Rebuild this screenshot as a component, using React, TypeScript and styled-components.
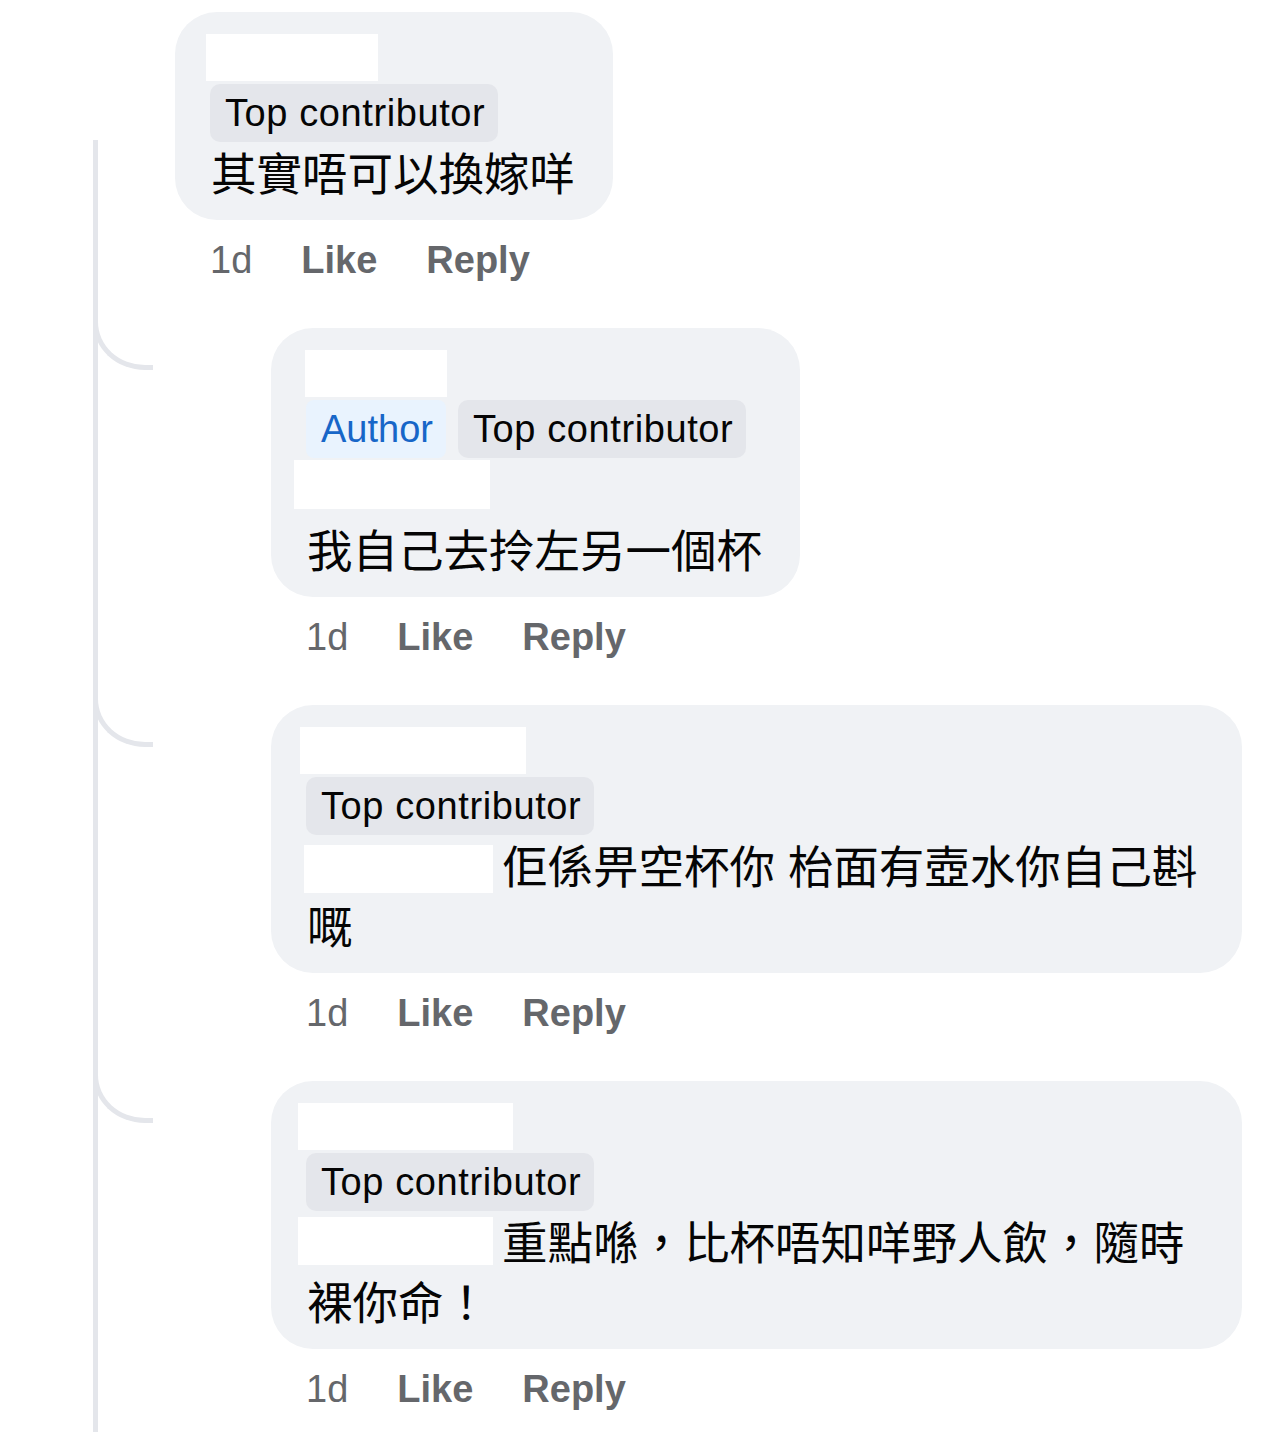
import React from "react";
import styled, { createGlobalStyle, css } from "styled-components";

const GlobalStyle = createGlobalStyle`
  html, body {
    margin: 0;
    padding: 0;
    background: #ffffff;
  }
  body {
    font-family: "Liberation Sans", "Noto Sans CJK TC", Arial, sans-serif;
    color: #050505;
  }
`;

const LINE = "#e4e6eb";

const Thread = styled.div`
  position: relative;
  display: flex;
  flex-direction: column;
  gap: 45px;
  padding: 12px 0 60px;
  &::before {
    content: "";
    position: absolute;
    left: 93px;
    top: 140px;
    bottom: 0;
    width: 5px;
    background: ${LINE};
  }
`;

const ReplyRow = styled.div`
  display: flex;
  align-items: flex-start;
  padding-left: 93px;
`;

const Connector = styled.div`
  flex-shrink: 0;
  width: 55px;
  height: 50px;
  margin-top: -13px;
  border-left: 5px solid ${LINE};
  border-bottom: 5px solid ${LINE};
  border-bottom-left-radius: 52px 48px;
`;

const CommentBox = styled.div<{ $indent: number }>`
  display: flex;
  flex-direction: column;
  align-items: flex-start;
  margin-left: ${(p) => p.$indent}px;
`;

const Bubble = styled.div`
  max-width: 971px;
  box-sizing: border-box;
  background: #f0f2f5;
  border-radius: 42px;
  padding: 22px 38px 14px 36px;
`;

const NameRedaction = styled.div<{ $w: number; $shift: number }>`
  width: ${(p) => p.$w}px;
  height: 47px;
  margin-left: ${(p) => p.$shift}px;
  margin-bottom: 3px;
  background: #ffffff;
`;

const BlockRedaction = styled.div<{ $w: number; $shift: number }>`
  width: ${(p) => p.$w}px;
  height: 49px;
  margin: 2px 0 10px ${(p) => p.$shift}px;
  background: #ffffff;
`;

const BadgeRow = styled.div`
  display: flex;
  gap: 12px;
  margin-left: -1px;
`;

const Badge = styled.span<{ $author?: boolean }>`
  display: inline-flex;
  align-items: center;
  height: 58px;
  padding: 0 13px 0 15px;
  border-radius: 10px;
  font-family: "Liberation Sans", Arial, sans-serif;
  font-size: 38px;
  letter-spacing: 0.6px;
  white-space: nowrap;
  background: #e4e6eb;
  color: #050505;
  ${(p) =>
    p.$author &&
    css`
      background: #e9f3fe;
      color: #1766c8;
      border-radius: 8px;
      letter-spacing: 0;
      padding: 0 13px 0 15px;
    `}
`;

const Text = styled.div`
  font-family: "Liberation Sans", "Noto Sans CJK TC", "Noto Sans CJK SC", sans-serif;
  font-size: 45.5px;
  line-height: 60px;
  padding-top: 4px;
  color: #050505;
`;

const InlineRedaction = styled.span<{ $w: number; $shift: number; $lift: number }>`
  display: inline-block;
  width: ${(p) => p.$w}px;
  height: 48px;
  margin-left: ${(p) => p.$shift}px;
  margin-right: 9px;
  vertical-align: middle;
  position: relative;
  top: ${(p) => -p.$lift}px;
  background: #ffffff;
`;

const Actions = styled.div`
  display: flex;
  gap: 49px;
  margin-top: 17px;
  padding-left: 35px;
  height: 46px;
  align-items: center;
  font-family: "Liberation Sans", Arial, sans-serif;
  font-size: 38px;
  color: #65676b;
`;

const Action = styled.span<{ $bold?: boolean }>`
  font-weight: ${(p) => (p.$bold ? 700 : 400)};
`;

type Comment = {
  name: { w: number; shift: number };
  author?: boolean;
  block?: { w: number; shift: number };
  inline?: { w: number; shift: number; lift: number };
  text: string;
};

const ActionBar = () => (
  <Actions>
    <Action>1d</Action>
    <Action $bold>Like</Action>
    <Action $bold>Reply</Action>
  </Actions>
);

const CommentItem = ({ c, indent }: { c: Comment; indent: number }) => (
  <CommentBox $indent={indent}>
    <Bubble>
      <NameRedaction $w={c.name.w} $shift={c.name.shift} />
      <BadgeRow>
        {c.author && <Badge $author>Author</Badge>}
        <Badge>Top contributor</Badge>
      </BadgeRow>
      {c.block && <BlockRedaction $w={c.block.w} $shift={c.block.shift} />}
      <Text>
        {c.inline && (
          <InlineRedaction $w={c.inline.w} $shift={c.inline.shift} $lift={c.inline.lift} />
        )}
        {c.text}
      </Text>
    </Bubble>
    <ActionBar />
  </CommentBox>
);

const root: Comment = {
  name: { w: 172, shift: -5 },
  text: "其實唔可以換嫁咩",
};

const replies: Comment[] = [
  {
    name: { w: 142, shift: -2 },
    author: true,
    block: { w: 196, shift: -13 },
    text: "我自己去拎左另一個杯",
  },
  {
    name: { w: 226, shift: -7 },
    inline: { w: 189, shift: -3, lift: 3 },
    text: "佢係畀空杯你 枱面有壺水你自己斟嘅",
  },
  {
    name: { w: 215, shift: -9 },
    inline: { w: 195, shift: -9, lift: 7 },
    text: "重點喺，比杯唔知咩野人飲，隨時裸你命！",
  },
];

export default function App() {
  return (
    <>
      <GlobalStyle />
      <Thread>
        <CommentItem c={root} indent={175} />
        {replies.map((r, i) => (
          <ReplyRow key={i}>
            <Connector />
            <CommentItem c={r} indent={118} />
          </ReplyRow>
        ))}
      </Thread>
    </>
  );
}
